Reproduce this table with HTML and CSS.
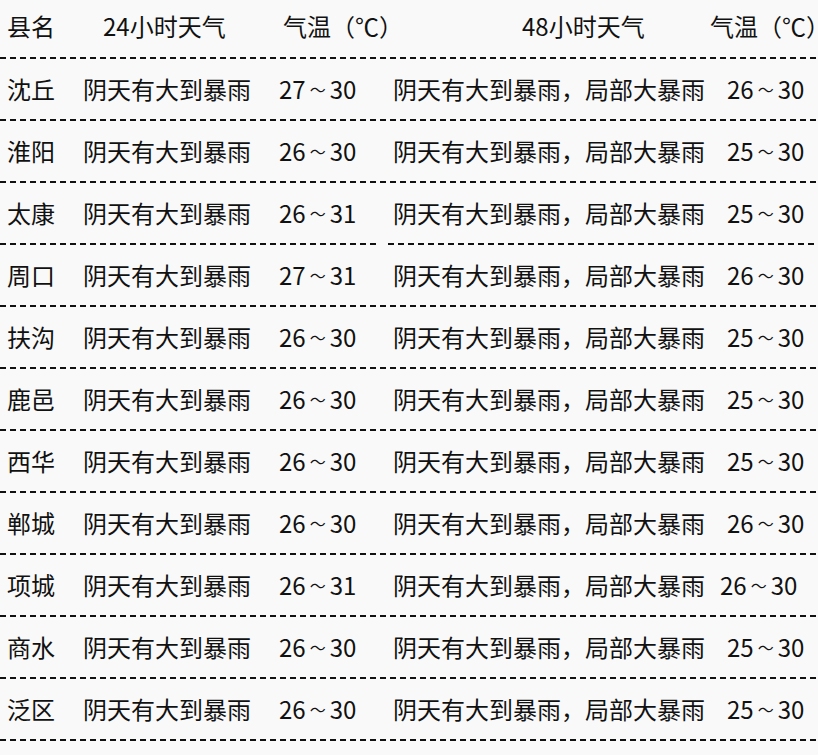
FILE: index.html
```html
<!DOCTYPE html>
<html lang="zh-CN">
<head>
<meta charset="utf-8">
<title>周口天气预报</title>
<link rel="stylesheet" href="styles.css">
</head>
<body>
<div class="table">
  <div class="row head">
    <div class="c1">县名</div>
    <div class="c2 h2">24小时天气</div>
    <div class="c3 h3">气温（℃）</div>
    <div class="c4 h4">48小时天气</div>
    <div class="c5 h5">气温（℃）</div>
  </div>
  <div class="row">
    <div class="c1">沈丘</div><div class="c2">阴天有大到暴雨</div><div class="c3">27<span class="tl">～</span>30</div><div class="c4">阴天有大到暴雨，局部大暴雨</div><div class="c5">26<span class="tl">～</span>30</div>
  </div>
  <div class="row">
    <div class="c1">淮阳</div><div class="c2">阴天有大到暴雨</div><div class="c3">26<span class="tl">～</span>30</div><div class="c4">阴天有大到暴雨，局部大暴雨</div><div class="c5">25<span class="tl">～</span>30</div>
  </div>
  <div class="row split">
    <div class="c1">太康</div><div class="c2">阴天有大到暴雨</div><div class="c3">26<span class="tl">～</span>31</div><div class="c4">阴天有大到暴雨，局部大暴雨</div><div class="c5">25<span class="tl">～</span>30</div>
  </div>
  <div class="row">
    <div class="c1">周口</div><div class="c2">阴天有大到暴雨</div><div class="c3">27<span class="tl">～</span>31</div><div class="c4">阴天有大到暴雨，局部大暴雨</div><div class="c5">26<span class="tl">～</span>30</div>
  </div>
  <div class="row">
    <div class="c1">扶沟</div><div class="c2">阴天有大到暴雨</div><div class="c3">26<span class="tl">～</span>30</div><div class="c4">阴天有大到暴雨，局部大暴雨</div><div class="c5">25<span class="tl">～</span>30</div>
  </div>
  <div class="row">
    <div class="c1">鹿邑</div><div class="c2">阴天有大到暴雨</div><div class="c3">26<span class="tl">～</span>30</div><div class="c4">阴天有大到暴雨，局部大暴雨</div><div class="c5">25<span class="tl">～</span>30</div>
  </div>
  <div class="row">
    <div class="c1">西华</div><div class="c2">阴天有大到暴雨</div><div class="c3">26<span class="tl">～</span>30</div><div class="c4">阴天有大到暴雨，局部大暴雨</div><div class="c5">25<span class="tl">～</span>30</div>
  </div>
  <div class="row">
    <div class="c1">郸城</div><div class="c2">阴天有大到暴雨</div><div class="c3">26<span class="tl">～</span>30</div><div class="c4">阴天有大到暴雨，局部大暴雨</div><div class="c5">26<span class="tl">～</span>30</div>
  </div>
  <div class="row">
    <div class="c1">项城</div><div class="c2">阴天有大到暴雨</div><div class="c3">26<span class="tl">～</span>31</div><div class="c4">阴天有大到暴雨，局部大暴雨</div><div class="c5 tight">26<span class="tl">～</span>30</div>
  </div>
  <div class="row">
    <div class="c1">商水</div><div class="c2">阴天有大到暴雨</div><div class="c3">26<span class="tl">～</span>30</div><div class="c4">阴天有大到暴雨，局部大暴雨</div><div class="c5">25<span class="tl">～</span>30</div>
  </div>
  <div class="row">
    <div class="c1">泛区</div><div class="c2">阴天有大到暴雨</div><div class="c3">26<span class="tl">～</span>30</div><div class="c4">阴天有大到暴雨，局部大暴雨</div><div class="c5">25<span class="tl">～</span>30</div>
  </div>
</div>
</body>
</html>
```

FILE: styles.css
```css
html, body {
  margin: 0;
  padding: 0;
  background: #f9f9f9;
}

body {
  font-family: "Noto Sans CJK SC", "Noto Sans", sans-serif;
  font-size: 24px;
  color: #111;
}

.table {
  display: flex;
  flex-direction: column;
  width: 818px;
}

.row {
  display: grid;
  grid-template-columns: 76px 196px 114px 334px 1fr;
  align-items: center;
  height: 62px;
  padding: 0 0 3px 7px;
  box-sizing: border-box;
  line-height: 1;
  white-space: nowrap;
  background-image: repeating-linear-gradient(90deg, #111 0 6px, transparent 6px 10px);
  background-size: 100% 2px;
  background-position: 0 100%;
  background-repeat: no-repeat;
}

.row.head {
  height: 59px;
  padding-bottom: 7px;
}

.row.split {
  background-image:
    repeating-linear-gradient(90deg, #111 0 6px, transparent 6px 10px),
    repeating-linear-gradient(90deg, #111 0 6px, transparent 6px 10px);
  background-size: 378px 2px, 430px 2px;
  background-position: 0 100%, 388px 100%;
}

.tl {
  display: inline-block;
  width: 24px;
  font-size: 16px;
  text-align: center;
  vertical-align: 3px;
}

.h2 { margin-left: 20px; }
.h3 { margin-left: 4px; }
.h4 { margin-left: 129px; }
.h5 { margin-left: -17px; }
.tight { margin-left: -7px; }
```
